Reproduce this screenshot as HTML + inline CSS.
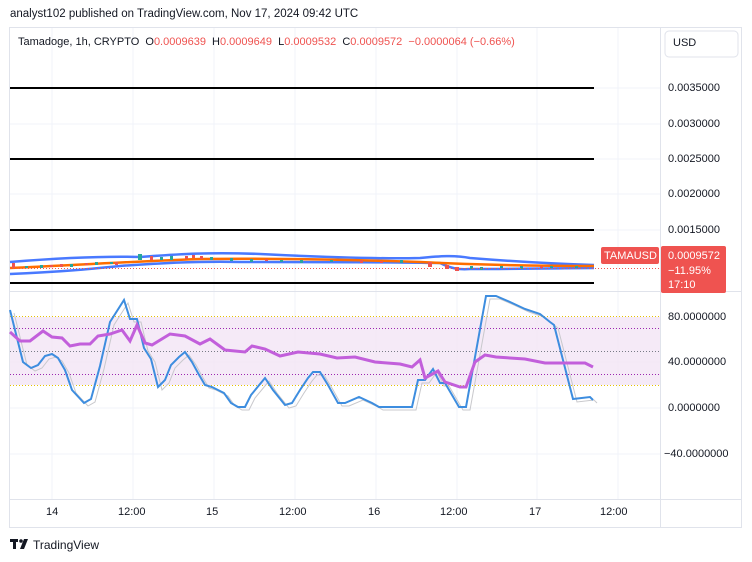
<!DOCTYPE html>
<html><head><meta charset="utf-8"><style>
body{margin:0;width:752px;height:562px;background:#fff;font-family:"Liberation Sans",sans-serif;overflow:hidden;position:relative}
.t{position:absolute;font-size:11px;color:#131722;white-space:nowrap}
</style></head><body>
<div class="t" style="left:10px;top:8px;font-size:11.5px">analyst102 published on TradingView.com, Nov 17, 2024 09:42 UTC</div>
<svg width="752" height="562" style="position:absolute;left:0;top:0">
<rect x="9.5" y="27.5" width="732" height="500" fill="none" stroke="#e0e3eb"/>
<g stroke="#f0f3fa" stroke-width="1">
<line x1="52" y1="28" x2="52" y2="499"/><line x1="133" y1="28" x2="133" y2="499"/><line x1="214" y1="28" x2="214" y2="499"/><line x1="295" y1="28" x2="295" y2="499"/><line x1="376" y1="28" x2="376" y2="499"/><line x1="457" y1="28" x2="457" y2="499"/><line x1="537" y1="28" x2="537" y2="499"/><line x1="618" y1="28" x2="618" y2="499"/>
<line x1="10" y1="362" x2="660" y2="362"/><line x1="10" y1="408" x2="660" y2="408"/><line x1="10" y1="454" x2="660" y2="454"/>
<line x1="10" y1="88" x2="660" y2="88"/><line x1="10" y1="124" x2="660" y2="124"/><line x1="10" y1="159" x2="660" y2="159"/><line x1="10" y1="194" x2="660" y2="194"/><line x1="10" y1="230" x2="660" y2="230"/>
</g>
<line x1="660.5" y1="28" x2="660.5" y2="527" stroke="#e0e3eb"/>
<line x1="10" y1="291.5" x2="741" y2="291.5" stroke="#e0e3eb"/>
<line x1="10" y1="499.5" x2="741" y2="499.5" stroke="#e0e3eb"/>
<rect x="665" y="31" width="73" height="26" rx="4" fill="#fff" stroke="#e0e3eb"/>
<g stroke="#000" stroke-width="2">
<line x1="10" y1="88" x2="594" y2="88"/><line x1="10" y1="159" x2="594" y2="159"/><line x1="10" y1="230" x2="594" y2="230"/><line x1="10" y1="283" x2="594" y2="283"/>
</g>
<path d="M10 262 C60 258 100 256 140 257 C180 254 210 252 260 254 C320 257 380 259 420 258 C440 256 455 255 470 258 C520 262 560 264 594 265" fill="none" stroke="#2962ff" stroke-width="2.5" opacity=".85"/>
<path d="M10 274 C60 272 90 269 120 266 C160 263 200 261 240 262 C300 262 380 262 440 263 C450 268 458 270 470 269 C530 269 570 268 594 268" fill="none" stroke="#2962ff" stroke-width="2.5" opacity=".85"/>
<path d="M10 268 C60 266 120 262 200 259 C280 258 360 260 420 262 C460 264 520 266 594 266" fill="none" stroke="#ff6d00" stroke-width="2.5"/>
<g fill="#26a69a"><rect x="25" y="266" width="3" height="2"/><rect x="40" y="265" width="3" height="3"/><rect x="70" y="264" width="3" height="3"/><rect x="95" y="262" width="3" height="3"/><rect x="110" y="262" width="3" height="2"/><rect x="138" y="254" width="4" height="6"/><rect x="160" y="257" width="3" height="3"/><rect x="170" y="256" width="3" height="4"/><rect x="210" y="257" width="3" height="3"/><rect x="230" y="258" width="3" height="3"/><rect x="250" y="259" width="3" height="3"/><rect x="280" y="260" width="3" height="2"/><rect x="300" y="260" width="3" height="3"/><rect x="330" y="260" width="3" height="2"/><rect x="400" y="260" width="3" height="3"/><rect x="470" y="266" width="3" height="3"/><rect x="480" y="267" width="3" height="3"/><rect x="500" y="266" width="3" height="2"/><rect x="520" y="266" width="3" height="3"/><rect x="550" y="266" width="3" height="2"/><rect x="575" y="266" width="3" height="2"/></g>
<g fill="#ef5350"><rect x="12" y="263" width="3" height="5"/><rect x="50" y="265" width="3" height="2"/><rect x="60" y="264" width="3" height="3"/><rect x="85" y="263" width="3" height="2"/><rect x="115" y="262" width="3" height="3"/><rect x="150" y="256" width="3" height="4"/><rect x="185" y="256" width="3" height="3"/><rect x="192" y="255" width="3" height="3"/><rect x="200" y="256" width="3" height="3"/><rect x="265" y="259" width="3" height="2"/><rect x="360" y="260" width="3" height="3"/><rect x="380" y="261" width="3" height="2"/><rect x="428" y="262" width="4" height="5"/><rect x="445" y="265" width="4" height="4"/><rect x="455" y="267" width="4" height="4"/><rect x="540" y="266" width="3" height="2"/></g>
<line x1="10" y1="268.5" x2="660" y2="268.5" stroke="#ef5350" stroke-dasharray="1 2"/>
<rect x="10" y="317" width="650" height="68" fill="#f3e5f5" opacity=".8"/>
<line x1="10" y1="316.5" x2="660" y2="316.5" stroke="#e5c100" stroke-dasharray="1 2"/>
<line x1="10" y1="385.5" x2="660" y2="385.5" stroke="#e5c100" stroke-dasharray="1 2"/>
<line x1="10" y1="328.5" x2="660" y2="328.5" stroke="#9c27b0" stroke-dasharray="1 2"/>
<line x1="10" y1="374.5" x2="660" y2="374.5" stroke="#9c27b0" stroke-dasharray="1 2"/>
<line x1="10" y1="351.5" x2="660" y2="351.5" stroke="#787b86" stroke-dasharray="1 2"/>
<polyline transform="translate(4,3)" fill="none" stroke="#c8c8cc" stroke-width="1" points="10,310 23,362 31,368 38,365 45,356 52,354 58,358 65,370 72,390 84,403 91,399 100,366 110,322 124,300 130,319 137,319 144,348 151,359 158,387 165,380 171,365 179,357 185,352 192,362 198,373 205,385 212,387 224,393 231,403 238,407 245,407 251,395 265,378 273,390 285,405 292,403 300,390 308,378 313,372 320,372 328,385 338,403 345,403 359,397 372,403 379,407 412,407 418,380 425,380 433,369 440,383 445,383 452,395 459,407 466,407 486,296 496,296 510,302 525,309 540,314 550,322 554,325 573,399 590,397 593,400"/>
<polyline fill="none" stroke="#3d8ddf" stroke-width="2" points="10,310 23,362 31,368 38,365 45,356 52,354 58,358 65,370 72,390 84,403 91,399 100,366 110,322 124,300 130,319 137,319 144,348 151,359 158,387 165,380 171,365 179,357 185,352 192,362 198,373 205,385 212,387 224,393 231,403 238,407 245,407 251,395 265,378 273,390 285,405 292,403 300,390 308,378 313,372 320,372 328,385 338,403 345,403 359,397 372,403 379,407 412,407 418,380 425,380 433,369 440,383 445,383 452,395 459,407 466,407 486,296 496,296 510,302 525,309 540,314 550,322 554,325 573,399 590,397 593,400"/>
<polyline fill="none" stroke="#c25fdb" stroke-width="3" points="10,332 20,341 30,341 43,331 52,337 62,338 70,346 80,344 90,344 98,336 110,334 122,330 130,341 137,325 145,343 152,345 170,334 185,336 200,344 210,339 225,350 245,352 252,346 265,349 280,356 298,352 320,354 337,358 355,357 375,362 400,364 412,367 420,360 425,378 438,371 445,382 460,387 466,387 475,362 485,355 496,357 510,358 525,359 545,363 585,363 593,367"/>
<rect x="601" y="247" width="58" height="17" rx="2" fill="#ef5350"/>
<rect x="661" y="246" width="65" height="47" rx="2" fill="#ef5350"/>
<g transform="translate(10,539)" fill="#131722"><rect x="0" y="0" width="8" height="3"/><rect x="3" y="0" width="3" height="10"/><circle cx="11" cy="2" r="1.8"/><path d="M14 0h4l-4 10h-4z"/></g>
</svg>
<div class="t" style="left:18px;top:36px;font-size:11px">Tamadoge, 1h, CRYPTO &nbsp;O<span style="color:#ef5350">0.0009639</span> &nbsp;H<span style="color:#ef5350">0.0009649</span> &nbsp;L<span style="color:#ef5350">0.0009532</span> &nbsp;C<span style="color:#ef5350">0.0009572</span> &nbsp;<span style="color:#ef5350">−0.0000064 (−0.66%)</span></div>
<div class="t" style="left:673px;top:37px">USD</div>
<div class="t" style="left:668px;top:82px">0.0035000</div>
<div class="t" style="left:668px;top:118px">0.0030000</div>
<div class="t" style="left:668px;top:153px">0.0025000</div>
<div class="t" style="left:668px;top:188px">0.0020000</div>
<div class="t" style="left:668px;top:224px">0.0015000</div>
<div class="t" style="left:604px;top:250px;color:#fff">TAMAUSD</div>
<div class="t" style="left:668px;top:249px;color:#fff;line-height:14.5px">0.0009572<br>−11.95%<br>17:10</div>
<div class="t" style="left:668px;top:311px">80.0000000</div>
<div class="t" style="left:668px;top:356px">40.0000000</div>
<div class="t" style="left:668px;top:402px">0.0000000</div>
<div class="t" style="left:664px;top:448px">−40.0000000</div>
<div class="t" style="left:46px;top:506px">14</div>
<div class="t" style="left:118px;top:506px">12:00</div>
<div class="t" style="left:206px;top:506px">15</div>
<div class="t" style="left:279px;top:506px">12:00</div>
<div class="t" style="left:368px;top:506px">16</div>
<div class="t" style="left:440px;top:506px">12:00</div>
<div class="t" style="left:529px;top:506px">17</div>
<div class="t" style="left:600px;top:506px">12:00</div>
<div class="t" style="left:33px;top:538px;font-size:12px">TradingView</div>
</body></html>
